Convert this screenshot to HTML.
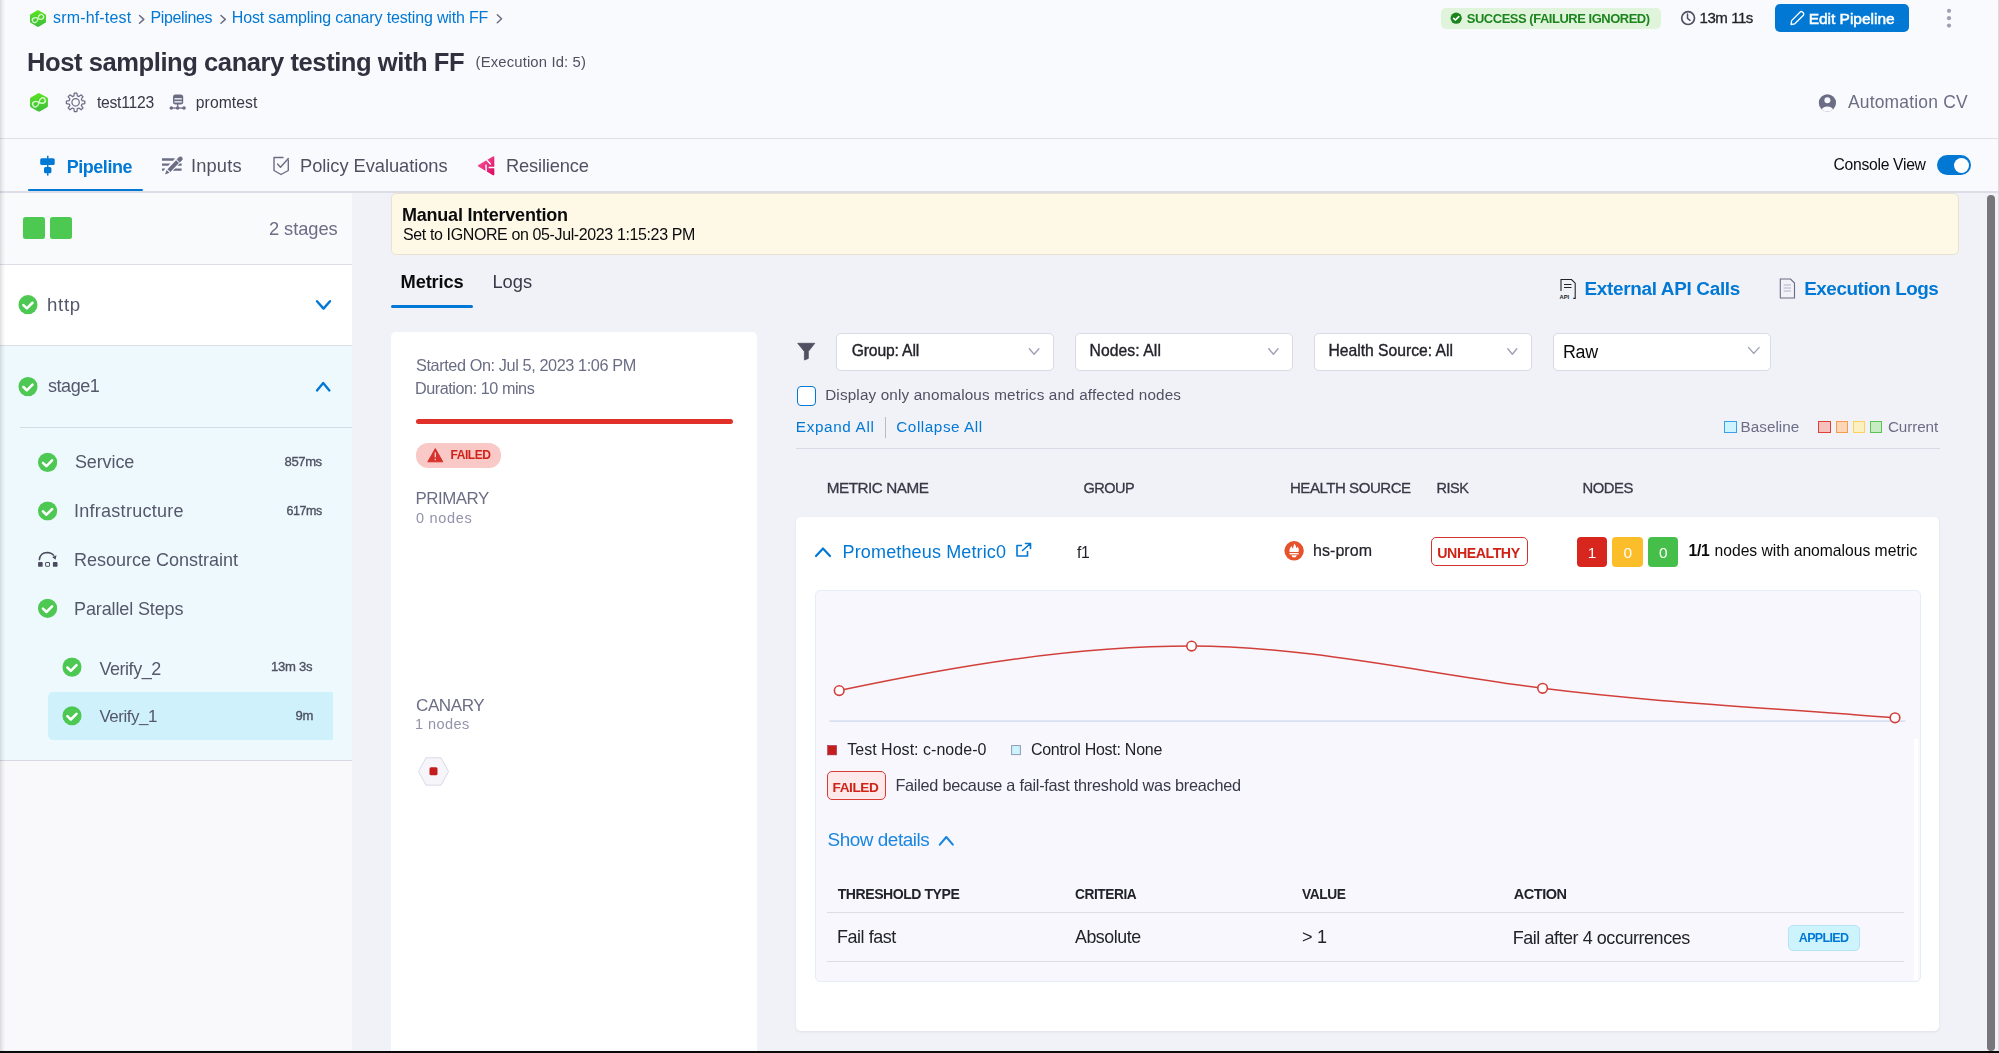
<!DOCTYPE html>
<html><head><meta charset="utf-8"><title>Host sampling canary testing with FF</title>
<style>
html,body{margin:0;padding:0}
body{width:1999px;height:1053px;overflow:hidden;position:relative;background:#f1f2f7;font-family:'Liberation Sans',sans-serif}
.t{position:absolute;white-space:pre;line-height:1;font-family:'Liberation Sans',sans-serif}
.a{position:absolute;box-sizing:border-box}
svg.a{overflow:visible}

</style></head><body>
<!-- header -->
<div class=a style="left:0;top:0;width:1999px;height:139px;background:#f9fafd;border-bottom:1px solid #dedfe7"></div>
<div class=a style="left:0;top:139px;width:1999px;height:54px;background:#f9fafd;border-bottom:2px solid #dcdde6"></div>
<div class=a style="left:1997.5px;top:0;width:1.5px;height:1051px;background:#d9d9df"></div>
<!-- left panel -->
<div class=a style="left:0;top:193px;width:352px;height:857px;background:#f9f9fc"></div>
<div class=a style="left:0;top:193px;width:352px;height:72px;background:#f9fafc;border-bottom:1px solid #dcdde6"></div>
<div class=a style="left:0;top:265px;width:352px;height:81px;background:#ffffff;border-bottom:1px solid #dcdde6"></div>
<div class=a style="left:0;top:346px;width:352px;height:415px;background:#eef9fe;border-bottom:1px solid #d6d9e2"></div>
<div class=a style="left:20px;top:427px;width:332px;height:1px;background:#d3dde4"></div>
<div class=a style="left:48px;top:692px;width:285px;height:48px;background:#cff1fb;border-radius:5px 0 0 5px"></div>
<div class=a style="left:0;top:0;width:5px;height:1051px;background:linear-gradient(90deg,rgba(40,40,50,0.15),rgba(40,40,50,0.08) 40%,rgba(40,40,50,0))"></div>
<!-- left squares -->
<div class=a style="left:23px;top:217px;width:22px;height:22px;background:#4dc952;border-radius:2.5px"></div>
<div class=a style="left:50px;top:217px;width:22px;height:22px;background:#4dc952;border-radius:2.5px"></div>
<!-- banner -->
<div class=a style="left:391px;top:193px;width:1568px;height:62px;background:#fef8e7;border:1px solid #e8e2d2;border-radius:5px"></div>
<div class=a style="left:391px;top:305px;width:82px;height:3px;background:#0278d5;border-radius:2px"></div>
<!-- left card -->
<div class=a style="left:391px;top:332px;width:366px;height:730px;background:#ffffff;border-radius:5px"></div>
<div class=a style="left:416px;top:418.5px;width:317px;height:5px;background:#e1302a;border-radius:3px"></div>
<div class=a style="left:416px;top:443px;width:85px;height:25px;background:#f8c9c7;border-radius:12px"></div>
<!-- right big card -->
<div class=a style="left:796px;top:517px;width:1143px;height:514px;background:#ffffff;border-radius:5px;box-shadow:0 1px 3px rgba(40,41,61,0.08)"></div>
<div class=a style="left:815px;top:590px;width:1106px;height:392px;background:#f7f7fd;border:1px solid #e4eef6;border-radius:5px"></div>
<div class=a style="left:1914px;top:739px;width:4px;height:241px;background:#ffffff"></div>
<!-- dropdowns -->
<div class=a style="left:836px;top:333px;width:218px;height:37.5px;background:#fff;border:1px solid #d9dae5;border-radius:5px"></div>
<div class=a style="left:1075px;top:333px;width:218px;height:37.5px;background:#fff;border:1px solid #d9dae5;border-radius:5px"></div>
<div class=a style="left:1314px;top:333px;width:218px;height:37.5px;background:#fff;border:1px solid #d9dae5;border-radius:5px"></div>
<div class=a style="left:1553px;top:333px;width:218px;height:37.5px;background:#fff;border:1px solid #d9dae5;border-radius:5px"></div>
<div class=a style="left:796.5px;top:386px;width:19.5px;height:19.5px;background:#fff;border:1.5px solid #0278d5;border-radius:4px"></div>
<div class=a style="left:885px;top:417px;width:1px;height:21px;background:#b8b9c9"></div>
<div class=a style="left:796px;top:448px;width:1144px;height:1px;background:#d9dae5"></div>
<!-- legend boxes -->
<div class=a style="left:1724px;top:420.5px;width:12.5px;height:12.5px;background:#cdf4fe;border:1.5px solid #3d9fe8"></div>
<div class=a style="left:1818px;top:420.5px;width:12.5px;height:12.5px;background:#f6c0bd;border:1.5px solid #e0403a"></div>
<div class=a style="left:1835.5px;top:420.5px;width:12.5px;height:12.5px;background:#fdd6b8;border:1.5px solid #f69a4c"></div>
<div class=a style="left:1852.5px;top:420.5px;width:12.5px;height:12.5px;background:#fdf0c0;border:1.5px solid #fbd35c"></div>
<div class=a style="left:1869.5px;top:420.5px;width:12.5px;height:12.5px;background:#c7ecc3;border:1.5px solid #5cc253"></div>
<!-- risk badge & nodes -->
<div class=a style="left:1431px;top:537px;width:96.5px;height:29px;background:#fff;border:1.5px solid #d2332c;border-radius:5px"></div>
<div class=a style="left:1577px;top:537px;width:30px;height:30px;background:#d7261e;border-radius:4px"></div>
<div class=a style="left:1612px;top:537px;width:30.5px;height:30px;background:#fcbd2b;border-radius:4px"></div>
<div class=a style="left:1648px;top:537px;width:30px;height:30px;background:#46bf4a;border-radius:4px"></div>
<!-- failed badge -->
<div class=a style="left:826.8px;top:770.8px;width:59.2px;height:29px;background:#fde9e9;border:1.7px solid #d63c36;border-radius:5px"></div>
<!-- table lines -->
<div class=a style="left:827px;top:912px;width:1077px;height:1px;background:#dcdde6"></div>
<div class=a style="left:827px;top:960.5px;width:1077px;height:1px;background:#dcdde6"></div>
<div class=a style="left:1787.5px;top:924.5px;width:72px;height:26px;background:#cdf3fd;border:1px solid #b8e3f3;border-radius:5px"></div>
<!-- success badge / button -->
<div class=a style="left:1441px;top:7.5px;width:220px;height:21.5px;background:#dff4da;border-radius:5px"></div>
<div class=a style="left:1775px;top:4px;width:134px;height:28px;background:#0278d5;border-radius:5px"></div>
<!-- toggle -->
<div class=a style="left:1937px;top:155px;width:34px;height:20px;background:#0278d5;border-radius:10px"></div>
<div class=a style="left:1953.5px;top:157.5px;width:15.5px;height:15.5px;background:#fff;border-radius:50%"></div>
<!-- tab underline -->
<div class=a style="left:28px;top:188.8px;width:114.5px;height:2.7px;background:#0278d5;border-radius:1.5px"></div>
<!-- scrollbar & bottom -->
<div class=a style="left:1987px;top:195px;width:8px;height:856px;background:#77777b;border-radius:4px"></div>
<div class=a style="left:0;top:1051px;width:1999px;height:2px;background:#0a0a0a"></div>
<svg class=a style="left:0;top:0" width="1999" height="1053" viewBox="0 0 1999 1053">
<defs>
<linearGradient id="hexg" x1="0" y1="0" x2="0" y2="1"><stop offset="0" stop-color="#5ae51f"/><stop offset="1" stop-color="#3dbd3c"/></linearGradient>
<linearGradient id="resg" x1="0" y1="0" x2="1" y2="1"><stop offset="0" stop-color="#f8589a"/><stop offset="1" stop-color="#dc0a62"/></linearGradient>
<symbol id="hex" viewBox="0 0 20 21"><path d="M10 0.6 L18.6 5.4 Q19.4 5.9 19.4 6.8 L19.4 14.2 Q19.4 15.1 18.6 15.6 L10.8 20.1 Q10 20.5 9.2 20.1 L1.4 15.6 Q0.6 15.1 0.6 14.2 L0.6 6.8 Q0.6 5.9 1.4 5.4 L9.2 0.9 Q10 0.4 10.8 0.9 Z" fill="url(#hexg)"/>
<g transform="rotate(-27 10 10.5)" fill="none" stroke="#d6f8cf" stroke-width="1.5" stroke-linecap="round"><path d="M10 10.5 C11.5 8.4 13 7.7 14.4 7.7 C16.2 7.7 17.1 9 17.1 10.5 C17.1 12 16.2 13.3 14.4 13.3 C13 13.3 11.5 12.6 10 10.5 C8.5 8.4 7 7.7 5.6 7.7 C3.8 7.7 2.9 9 2.9 10.5 C2.9 12 3.8 13.3 5.6 13.3 C7 13.3 8.5 12.6 10 10.5"/></g></symbol>
<symbol id="chk" viewBox="0 0 20 20"><circle cx="10" cy="10" r="9.8" fill="#4cc853"/><path d="M5.3 10.4 L8.8 13.8 L14.6 8" fill="none" stroke="#fff" stroke-width="2.6" stroke-linecap="round" stroke-linejoin="round"/></symbol>
</defs>
<!-- breadcrumb hex -->
<use href="#hex" x="29.5" y="9.5" width="17" height="18"/>
<use href="#hex" x="29.5" y="92.3" width="19" height="20"/>
<!-- breadcrumb chevrons -->
<g fill="none" stroke="#6b6d85" stroke-width="1.5" stroke-linecap="round" stroke-linejoin="round">
<path d="M139.5 15.5 L143.8 19.4 L139.5 23.2"/>
<path d="M221 15.5 L225.3 19.4 L221 23.2"/>
<path d="M497.3 14.8 L501.6 18.8 L497.3 22.7"/>
</g>
<!-- gear -->
<g transform="translate(75.6 102.3)" fill="none" stroke="#6b6d85" stroke-width="1.25" stroke-linejoin="round">
<path d="M-1.71 -6.38 L-1.29 -9.21 L1.29 -9.21 L1.71 -6.38 L3.30 -5.72 L5.60 -7.43 L7.43 -5.60 L5.72 -3.30 L6.38 -1.71 L9.21 -1.29 L9.21 1.29 L6.38 1.71 L5.72 3.30 L7.43 5.60 L5.60 7.43 L3.30 5.72 L1.71 6.38 L1.29 9.21 L-1.29 9.21 L-1.71 6.38 L-3.30 5.72 L-5.60 7.43 L-7.43 5.60 L-5.72 3.30 L-6.38 1.71 L-9.21 1.29 L-9.21 -1.29 L-6.38 -1.71 L-5.72 -3.30 L-7.43 -5.60 L-5.60 -7.43 L-3.30 -5.72 Z"/>
<circle cx="0" cy="0" r="3.7"/>
</g>
<!-- server -->
<g fill="#6b6d85">
<rect x="173" y="94.6" width="10.2" height="10" rx="2.5"/>
<rect x="174.4" y="98.2" width="7.4" height="1.3" fill="#f9fafd"/>
<rect x="174.4" y="101.2" width="7.4" height="1.3" fill="#f9fafd"/>
<rect x="177" y="104" width="1.3" height="4"/>
<rect x="171" y="107.4" width="13" height="1.3"/>
<circle cx="171.3" cy="108" r="1.8"/><circle cx="177.6" cy="108" r="1.8"/><circle cx="184" cy="108" r="1.8"/>
</g>
<!-- success check -->
<circle cx="1456.2" cy="18.2" r="5.6" fill="#1b841d"/>
<path d="M1453.6 18.3 L1455.4 20 L1458.8 16.6" fill="none" stroke="#fff" stroke-width="1.6" stroke-linecap="round" stroke-linejoin="round"/>
<!-- clock -->
<circle cx="1688.1" cy="18.1" r="6.4" fill="none" stroke="#4f5162" stroke-width="1.7"/>
<path d="M1687.5 14 L1687.5 18.3 L1690 20.3" fill="none" stroke="#4f5162" stroke-width="1.5" stroke-linecap="round"/>
<!-- pencil -->
<g fill="none" stroke="#fff" stroke-width="1.3" stroke-linejoin="round">
<path d="M1791 24.5 L1791.6 20.6 L1800.2 12 Q1801.3 11 1802.4 12 L1803.4 13 Q1804.4 14.1 1803.4 15.2 L1794.8 23.8 Z"/>
</g>
<!-- kebab -->
<g fill="#9ea0b5"><circle cx="1949" cy="10.8" r="2.1"/><circle cx="1949" cy="18.2" r="2.1"/><circle cx="1949" cy="25.6" r="2.1"/></g>
<!-- person -->
<defs><clipPath id="pc"><circle cx="1827.4" cy="102.9" r="8.6"/></clipPath></defs>
<circle cx="1827.4" cy="102.9" r="8.6" fill="#6b6d85"/>
<g clip-path="url(#pc)" fill="#f9fafd"><circle cx="1827.4" cy="100.3" r="3"/><ellipse cx="1827.4" cy="110.6" rx="6" ry="4.2"/></g>
<!-- pipeline tab icon -->
<g fill="#0278d5">
<rect x="47" y="155.8" width="1.5" height="3"/>
<rect x="40.2" y="158.3" width="14.5" height="6.6" rx="1.5"/>
<rect x="47" y="164" width="1.5" height="4"/>
<rect x="44" y="167" width="7.4" height="6.3" rx="1.5"/>
<rect x="47" y="172" width="1.5" height="3.6"/>
</g>
<!-- inputs tab icon -->
<g fill="#6b6d85">
<path d="M162 158.3 H175 L173.2 160.7 H162 Z"/>
<path d="M162 163.4 H170.3 L168.2 165.8 H162 Z"/>
<path d="M162 168.5 H165.3 L163.6 170.8 H162 Z"/>
<path d="M174.8 168.5 H181.6 V170.8 H172.8 Z"/>
<path d="M178.6 163.4 H181.6 V165.8 H176.6 Z"/>
<path paint-order="stroke" stroke="#f9fafd" stroke-width="1.6" stroke-linejoin="round" d="M165.00 174.60 L169.50 172.84 L166.63 170.05 Z"/><path paint-order="stroke" stroke="#f9fafd" stroke-width="1.6" stroke-linejoin="round" d="M170.34 171.98 L178.97 163.08 L176.11 160.29 L167.47 169.19 Z"/><path d="M179.81 162.22 L182.19 159.77 L182.23 157.72 L181.37 156.88 L179.32 156.98 L176.94 159.43 Z" stroke="#6b6d85" stroke-width="0.6" stroke-linejoin="round"/>
</g>
<!-- policy tab icon -->
<g fill="none" stroke="#6b6d85" stroke-width="1.4" stroke-linejoin="round" stroke-linecap="round">
<path d="M274 157.5 L283 157.5 M288.3 160 L288.3 170.5 L281 174.5 L274 170.5 L274 157.5"/>
<path d="M277.5 164 L280.5 167.2 L288.3 158.5"/>
</g>
<!-- resilience tab icon -->
<path d="M478.8 165.8 L493.4 157.3 L493.4 174.4 Z" fill="url(#resg)" stroke="url(#resg)" stroke-width="1.8" stroke-linejoin="round"/>
<g stroke="#f9fafd" stroke-width="1.5" fill="none" stroke-linecap="butt">
<path d="M486.6 159.8 L490.8 164.4"/>
<path d="M485.9 164.6 L486.3 171.5"/>
<path d="M488.6 167.6 L495 167.4"/>
</g>
<!-- left panel checks -->
<use href="#chk" x="18.2" y="294.9" width="19.6" height="19.6"/>
<use href="#chk" x="18.2" y="376.8" width="19.6" height="19.6"/>
<use href="#chk" x="37.8" y="452.6" width="19.6" height="19.6"/>
<use href="#chk" x="37.8" y="501.2" width="19.6" height="19.6"/>
<use href="#chk" x="37.8" y="598.5" width="19.6" height="19.6"/>
<use href="#chk" x="62.2" y="657.3" width="19.6" height="19.6"/>
<use href="#chk" x="62.2" y="706" width="19.6" height="19.6"/>
<!-- chevrons stage rows -->
<path d="M317 301.2 L323.5 308.6 L330 301.2" fill="none" stroke="#0278d5" stroke-width="2.4" stroke-linecap="round" stroke-linejoin="round"/>
<path d="M317 390.4 L323.2 383 L329.4 390.4" fill="none" stroke="#0278d5" stroke-width="2.4" stroke-linecap="round" stroke-linejoin="round"/>
<!-- resource constraint icon -->
<g fill="#4a4b5d">
<path d="M39.3 560.2 Q39.8 552.4 47.4 552.4 Q51.6 552.5 54 555.6" fill="none" stroke="#4a4b5d" stroke-width="1.5"/>
<path d="M56.5 555.2 L55.5 559.8 L52.2 557 Z"/>
<rect x="38.1" y="562" width="4.6" height="4.8" rx="0.9"/>
<rect x="45.6" y="562.5" width="3.9" height="3.8" rx="0.5" fill="none" stroke="#4a4b5d" stroke-width="1"/>
<rect x="52.9" y="562" width="4.6" height="4.8" rx="0.9"/>
</g>
<!-- API icon -->
<g fill="none" stroke="#22222a" stroke-width="1.1">
<path d="M1561 291 L1561 279.5 L1571.5 279.5 L1575.2 283.2 L1575.2 298.4 L1573.3 298.4"/>
<path d="M1564 284.5 H1571.5 M1564 287.5 H1571.5"/>
</g>
<text x="1559.5" y="298.6" font-family="Liberation Sans" font-weight="700" font-size="5.8" fill="#22222a">API</text>
<!-- doc icon -->
<g fill="none" stroke="#6b6d85" stroke-width="1.1">
<path d="M1780.3 279 L1790.5 279 L1794.5 283 L1794.5 298 L1780.3 298 Z"/>
<path d="M1783.6 285 H1791 M1783.6 288 H1791 M1783.6 291 H1791" stroke="#b0b1c4"/>
</g>
<!-- funnel -->
<path d="M797.7 343.3 H814.8 L808.3 351.5 V358.5 L804.4 360 V351.5 Z" fill="#4f5162" stroke="#4f5162" stroke-width="0.8" stroke-linejoin="round"/>
<!-- dropdown chevrons -->
<g fill="none" stroke="#9ea0b5" stroke-width="1.4" stroke-linecap="round" stroke-linejoin="round">
<path d="M1029.3 348.8 L1034.1 354.2 L1038.9 348.8"/>
<path d="M1268.8 348.8 L1273.4 354.2 L1278 348.8"/>
<path d="M1507.8 348.8 L1512.3 354.2 L1516.8 348.8"/>
<path d="M1748.6 347.6 L1753.8 353.4 L1759 347.6"/>
</g>
<!-- warning triangle -->
<path d="M435.3 448.6 L442.8 461.8 L427.8 461.8 Z" fill="#d8302a" stroke="#d8302a" stroke-width="1" stroke-linejoin="round"/>
<rect x="434.6" y="452.4" width="1.4" height="5" fill="#f6c7c6"/><rect x="434.6" y="458.8" width="1.4" height="1.4" fill="#f6c7c6"/>
<!-- node hexagon -->
<path d="M426 757.8 L441 757.8 L448.5 771.5 L441 785.2 L426 785.2 L418.5 771.5 Z" fill="#f5f5fa" stroke="#d9dae5" stroke-width="1"/>
<rect x="429.5" y="767.2" width="8" height="8" rx="1.5" fill="#c41d1d"/>
<!-- prom row -->
<path d="M816 556 L823 548.5 L830 556" fill="none" stroke="#0278d5" stroke-width="2.2" stroke-linecap="round" stroke-linejoin="round"/>
<g fill="none" stroke="#0278d5" stroke-width="1.6" stroke-linejoin="round">
<path d="M1022 545.5 L1017 545.5 L1017 556 L1027.5 556 L1027.5 551"/>
<path d="M1022.5 550.5 L1030.5 543.5 M1025.5 543.5 L1030.5 543.5 L1030.5 548.5" stroke-linecap="round"/>
</g>
<circle cx="1294.1" cy="550.8" r="9.7" fill="#e6522c"/>
<path d="M1289.5 552 Q1289 548.5 1291.5 546 Q1292 548 1293 548.5 Q1293.5 545.5 1294.5 543.5 Q1296 546 1296.5 548.3 Q1297.5 547.5 1297.8 546.5 Q1299.6 549.5 1298.6 552 Z" fill="#fff"/>
<rect x="1289.5" y="553" width="9.2" height="1.4" fill="#fff"/>
<path d="M1291.5 555.3 H1296.8 Q1296.5 557.5 1294.1 557.5 Q1291.8 557.5 1291.5 555.3 Z" fill="#fff"/>
<!-- chart -->
<line x1="829.6" y1="721.2" x2="1905.4" y2="721.2" stroke="#cbd9ee" stroke-width="1.2"/>
<path d="M839.2 690.6 C956.7 665.8 1074.1 646.1 1191.6 646.1 C1308.6 646.1 1425.6 673.6 1542.6 688.3 C1660 703.1 1777.5 708 1895 717.8" fill="none" stroke="#d23f3a" stroke-width="1.5"/>
<g fill="#fff" stroke="#d23f3a" stroke-width="1.6">
<circle cx="839.2" cy="690.6" r="4.8"/><circle cx="1191.6" cy="646.1" r="4.8"/><circle cx="1542.6" cy="688.3" r="4.8"/><circle cx="1895" cy="717.8" r="4.8"/>
</g>
<rect x="827.6" y="745.5" width="9" height="9.4" fill="#c41d1d" stroke="#a8304a" stroke-width="0.6"/>
<rect x="1011.6" y="745.6" width="8.8" height="9" fill="#cdf4fe" stroke="#8e9bb5" stroke-width="1"/>
<!-- show details chevron -->
<path d="M939.8 844.6 L946.3 837 L952.8 844.6" fill="none" stroke="#1a86e0" stroke-width="2.1" stroke-linecap="round" stroke-linejoin="round"/>
</svg>

<div style="position:absolute;left:0;top:0;width:1999px;height:1053px;will-change:transform">
<div class=t style="left:53.00px;top:10.00px;font-size:15.99px;font-weight:400;color:#0278d5;letter-spacing:0.177px;">srm-hf-test</div>
<div class=t style="left:150.50px;top:10.00px;font-size:15.99px;font-weight:400;color:#0278d5;letter-spacing:-0.359px;">Pipelines</div>
<div class=t style="left:231.80px;top:10.00px;font-size:15.99px;font-weight:400;color:#0278d5;letter-spacing:-0.157px;">Host sampling canary testing with FF</div>
<div class=t style="left:27.06px;top:50.00px;font-size:25.58px;font-weight:700;color:#30313e;letter-spacing:-0.450px;">Host sampling canary testing with FF</div>
<div class=t style="left:475.60px;top:55.00px;font-size:14.83px;font-weight:400;color:#4f5162;letter-spacing:0.148px;">(Execution Id: 5)</div>
<div class=t style="left:96.90px;top:95.00px;font-size:15.7px;font-weight:400;color:#383946;letter-spacing:-0.242px;">test1123</div>
<div class=t style="left:195.80px;top:95.00px;font-size:15.7px;font-weight:400;color:#383946;letter-spacing:0.076px;">promtest</div>
<div class=t style="left:1466.80px;top:13.00px;font-size:12.95px;font-weight:700;color:#1b841d;letter-spacing:-0.450px;">SUCCESS (FAILURE IGNORED)</div>
<div class=t style="left:1699.56px;top:10.00px;font-size:15.04px;font-weight:400;color:#22222a;letter-spacing:-0.450px;-webkit-text-stroke:0.3px currentColor">13m 11s</div>
<div class=t style="left:1808.70px;top:11.00px;font-size:15.55px;font-weight:400;color:#ffffff;letter-spacing:-0.040px;-webkit-text-stroke:0.5px currentColor">Edit Pipeline</div>
<div class=t style="left:1847.90px;top:94.00px;font-size:17.44px;font-weight:400;color:#6b6d85;letter-spacing:0.204px;">Automation CV</div>
<div class=t style="left:66.72px;top:158.00px;font-size:17.98px;font-weight:700;color:#0278d5;letter-spacing:-0.450px;">Pipeline</div>
<div class=t style="left:190.90px;top:157.00px;font-size:18.31px;font-weight:400;color:#4f5162;letter-spacing:0.161px;">Inputs</div>
<div class=t style="left:300.10px;top:157.00px;font-size:18.31px;font-weight:400;color:#4f5162;letter-spacing:-0.061px;">Policy Evaluations</div>
<div class=t style="left:505.90px;top:157.00px;font-size:18.31px;font-weight:400;color:#4f5162;letter-spacing:-0.148px;">Resilience</div>
<div class=t style="left:1833.60px;top:157.00px;font-size:15.7px;font-weight:400;color:#0b0b0d;letter-spacing:-0.300px;">Console View</div>
<div class=t style="left:269.00px;top:220.00px;font-size:18.31px;font-weight:400;color:#6b6d85;letter-spacing:-0.074px;">2 stages</div>
<div class=t style="left:46.96px;top:296.00px;font-size:18.68px;font-weight:400;color:#55576b;letter-spacing:0.700px;">http</div>
<div class=t style="left:48.00px;top:377.00px;font-size:18.01px;font-weight:400;color:#55576b;letter-spacing:-0.450px;">stage1</div>
<div class=t style="left:74.90px;top:453.00px;font-size:18.02px;font-weight:400;color:#55576b;letter-spacing:-0.109px;">Service</div>
<div class=t style="left:284.60px;top:455.00px;font-size:13.08px;font-weight:400;color:#4f5162;letter-spacing:-0.429px;-webkit-text-stroke:0.35px currentColor">857ms</div>
<div class=t style="left:74.00px;top:502.00px;font-size:18.02px;font-weight:400;color:#55576b;letter-spacing:0.261px;">Infrastructure</div>
<div class=t style="left:286.60px;top:505.00px;font-size:12.45px;font-weight:400;color:#4f5162;letter-spacing:-0.450px;-webkit-text-stroke:0.35px currentColor">617ms</div>
<div class=t style="left:74.00px;top:551.00px;font-size:18.02px;font-weight:400;color:#55576b;letter-spacing:-0.012px;">Resource Constraint</div>
<div class=t style="left:74.00px;top:600.00px;font-size:18.02px;font-weight:400;color:#55576b;letter-spacing:-0.127px;">Parallel Steps</div>
<div class=t style="left:99.40px;top:660.00px;font-size:17.99px;font-weight:400;color:#55576b;letter-spacing:-0.450px;">Verify_2</div>
<div class=t style="left:271.00px;top:660.00px;font-size:13.08px;font-weight:400;color:#4f5162;letter-spacing:-0.270px;-webkit-text-stroke:0.35px currentColor">13m 3s</div>
<div class=t style="left:99.40px;top:709.00px;font-size:16.91px;font-weight:400;color:#55576b;letter-spacing:-0.450px;">Verify_1</div>
<div class=t style="left:295.50px;top:709.00px;font-size:13.08px;font-weight:400;color:#4f5162;letter-spacing:-0.300px;-webkit-text-stroke:0.35px currentColor">9m</div>
<div class=t style="left:402.00px;top:206.00px;font-size:18.02px;font-weight:700;color:#0b0b0d;letter-spacing:-0.231px;">Manual Intervention</div>
<div class=t style="left:403.00px;top:227.00px;font-size:15.99px;font-weight:400;color:#0b0b0d;letter-spacing:-0.374px;">Set to IGNORE on 05-Jul-2023 1:15:23 PM</div>
<div class=t style="left:400.60px;top:273.00px;font-size:18.31px;font-weight:700;color:#0b0b0d;letter-spacing:-0.182px;">Metrics</div>
<div class=t style="left:492.40px;top:273.00px;font-size:18.31px;font-weight:400;color:#383946;letter-spacing:0.024px;">Logs</div>
<div class=t style="left:1584.50px;top:280.00px;font-size:18.9px;font-weight:700;color:#0278d5;letter-spacing:-0.305px;">External API Calls</div>
<div class=t style="left:1804.20px;top:280.00px;font-size:18.89px;font-weight:700;color:#0278d5;letter-spacing:-0.450px;">Execution Logs</div>
<div class=t style="left:416.00px;top:357.00px;font-size:16.28px;font-weight:400;color:#6b6d85;letter-spacing:-0.404px;">Started On: Jul 5, 2023 1:06 PM</div>
<div class=t style="left:415.00px;top:380.00px;font-size:16.22px;font-weight:400;color:#6b6d85;letter-spacing:-0.450px;">Duration: 10 mins</div>
<div class=t style="left:450.40px;top:449.00px;font-size:12.06px;font-weight:700;color:#cf2318;letter-spacing:-0.450px;">FAILED</div>
<div class=t style="left:415.43px;top:491.00px;font-size:16.88px;font-weight:400;color:#6b6d85;letter-spacing:-0.450px;">PRIMARY</div>
<div class=t style="left:416.00px;top:511.00px;font-size:14.53px;font-weight:400;color:#9293ab;letter-spacing:0.684px;">0 nodes</div>
<div class=t style="left:416.00px;top:697.00px;font-size:17.09px;font-weight:400;color:#6b6d85;letter-spacing:-0.450px;">CANARY</div>
<div class=t style="left:415.00px;top:717.00px;font-size:14.53px;font-weight:400;color:#9293ab;letter-spacing:0.434px;">1 nodes</div>
<div class=t style="left:851.70px;top:343.00px;font-size:15.7px;font-weight:400;color:#22222a;letter-spacing:-0.152px;-webkit-text-stroke:0.35px currentColor">Group: All</div>
<div class=t style="left:1089.50px;top:343.00px;font-size:15.7px;font-weight:400;color:#22222a;letter-spacing:0.088px;-webkit-text-stroke:0.35px currentColor">Nodes: All</div>
<div class=t style="left:1328.50px;top:343.00px;font-size:15.7px;font-weight:400;color:#22222a;letter-spacing:-0.016px;-webkit-text-stroke:0.35px currentColor">Health Source: All</div>
<div class=t style="left:1563.00px;top:344.00px;font-size:17.88px;font-weight:400;color:#0b0b0d;letter-spacing:-0.300px;">Raw</div>
<div class=t style="left:825.20px;top:387.00px;font-size:15.26px;font-weight:400;color:#4f5162;letter-spacing:0.160px;">Display only anomalous metrics and affected nodes</div>
<div class=t style="left:795.80px;top:419.00px;font-size:15.26px;font-weight:400;color:#0278d5;letter-spacing:0.665px;">Expand All</div>
<div class=t style="left:896.30px;top:419.00px;font-size:15.26px;font-weight:400;color:#0278d5;letter-spacing:0.560px;">Collapse All</div>
<div class=t style="left:1740.60px;top:419.00px;font-size:15.26px;font-weight:400;color:#6b6d85;letter-spacing:0.026px;">Baseline</div>
<div class=t style="left:1887.90px;top:419.00px;font-size:15.26px;font-weight:400;color:#6b6d85;letter-spacing:-0.102px;">Current</div>
<div class=t style="left:826.66px;top:480.00px;font-size:15.26px;font-weight:400;color:#383946;letter-spacing:-0.450px;-webkit-text-stroke:0.3px currentColor">METRIC NAME</div>
<div class=t style="left:1083.40px;top:481.00px;font-size:14.51px;font-weight:400;color:#383946;letter-spacing:-0.450px;-webkit-text-stroke:0.3px currentColor">GROUP</div>
<div class=t style="left:1289.98px;top:480.00px;font-size:15.03px;font-weight:400;color:#383946;letter-spacing:-0.450px;-webkit-text-stroke:0.3px currentColor">HEALTH SOURCE</div>
<div class=t style="left:1436.41px;top:481.00px;font-size:14.5px;font-weight:400;color:#383946;letter-spacing:-0.450px;-webkit-text-stroke:0.3px currentColor">RISK</div>
<div class=t style="left:1582.49px;top:481.00px;font-size:14.82px;font-weight:400;color:#383946;letter-spacing:-0.450px;-webkit-text-stroke:0.3px currentColor">NODES</div>
<div class=t style="left:842.60px;top:543.00px;font-size:18.02px;font-weight:400;color:#0278d5;letter-spacing:0.131px;">Prometheus Metric0</div>
<div class=t style="left:1077.00px;top:545.00px;font-size:15.7px;font-weight:400;color:#22222a;letter-spacing:-0.300px;">f1</div>
<div class=t style="left:1313.00px;top:543.00px;font-size:15.99px;font-weight:400;color:#22222a;letter-spacing:0.065px;-webkit-text-stroke:0.2px currentColor">hs-prom</div>
<div class=t style="left:1437.30px;top:546.00px;font-size:14.2px;font-weight:700;color:#cf2318;letter-spacing:-0.450px;">UNHEALTHY</div>
<div class=t style="left:1587.70px;top:545.00px;font-size:15.41px;font-weight:400;color:#ffffff;letter-spacing:0.000px;">1</div>
<div class=t style="left:1623.50px;top:545.00px;font-size:15.41px;font-weight:400;color:#ffffff;letter-spacing:0.000px;">0</div>
<div class=t style="left:1659.00px;top:545.00px;font-size:15.41px;font-weight:400;color:#ffffff;letter-spacing:0.000px;">0</div>
<div class=t style="left:1688.50px;top:543.00px;font-size:15.7px;font-weight:700;color:#0b0b0d;letter-spacing:-0.300px;">1/1</div>
<div class=t style="left:1714.50px;top:543.00px;font-size:15.7px;font-weight:400;color:#0b0b0d;letter-spacing:-0.016px;">nodes with anomalous metric</div>
<div class=t style="left:847.20px;top:742.00px;font-size:15.99px;font-weight:400;color:#22222a;letter-spacing:0.033px;">Test Host: c-node-0</div>
<div class=t style="left:1030.90px;top:742.00px;font-size:15.99px;font-weight:400;color:#22222a;letter-spacing:-0.267px;">Control Host: None</div>
<div class=t style="left:832.59px;top:781.00px;font-size:13.64px;font-weight:700;color:#cf2318;letter-spacing:-0.450px;">FAILED</div>
<div class=t style="left:895.40px;top:777.00px;font-size:16.28px;font-weight:400;color:#383946;letter-spacing:-0.258px;">Failed because a fail-fast threshold was breached</div>
<div class=t style="left:827.50px;top:831.00px;font-size:18.9px;font-weight:400;color:#1a86e0;letter-spacing:-0.442px;">Show details</div>
<div class=t style="left:837.70px;top:887.00px;font-size:14.05px;font-weight:700;color:#22222a;letter-spacing:-0.450px;">THRESHOLD TYPE</div>
<div class=t style="left:1075.10px;top:888.00px;font-size:13.72px;font-weight:700;color:#22222a;letter-spacing:-0.450px;">CRITERIA</div>
<div class=t style="left:1302.00px;top:888.00px;font-size:13.79px;font-weight:700;color:#22222a;letter-spacing:-0.450px;">VALUE</div>
<div class=t style="left:1513.70px;top:887.00px;font-size:14.52px;font-weight:700;color:#22222a;letter-spacing:-0.450px;">ACTION</div>
<div class=t style="left:837.00px;top:929.00px;font-size:17.97px;font-weight:400;color:#22222a;letter-spacing:-0.450px;">Fail fast</div>
<div class=t style="left:1075.00px;top:929.00px;font-size:17.8px;font-weight:400;color:#22222a;letter-spacing:-0.450px;">Absolute</div>
<div class=t style="left:1302.00px;top:928.00px;font-size:18.02px;font-weight:400;color:#22222a;letter-spacing:-0.300px;">&gt; 1</div>
<div class=t style="left:1512.70px;top:929.00px;font-size:17.99px;font-weight:400;color:#22222a;letter-spacing:-0.450px;">Fail after 4 occurrences</div>
<div class=t style="left:1798.80px;top:932.00px;font-size:12.5px;font-weight:700;color:#0278d5;letter-spacing:-0.648px;">APPLIED</div>
</div>
</body></html>
